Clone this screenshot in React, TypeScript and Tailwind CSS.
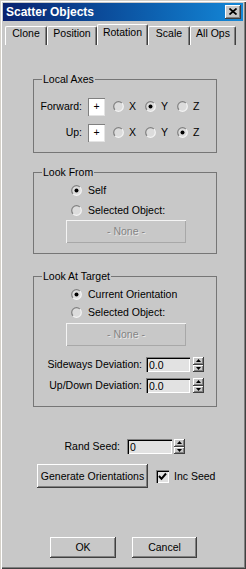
import React from "react";

const RAISED =
  "shadow-[inset_-1px_-1px_#404040,inset_1px_1px_#ffffff,inset_-2px_-2px_#808080]";
const SUNKEN =
  "shadow-[inset_1px_1px_#808080,inset_2px_2px_#000000,inset_-1px_-1px_#ffffff]";

function Radio({ checked }: { checked?: boolean }) {
  return (
    <svg width="11" height="11" viewBox="0 0 11 11" className="shrink-0">
      <circle cx="5.5" cy="5.5" r="4.8" fill="#dcdcdc" />
      <path d="M2.1 8.9 A4.8 4.8 0 0 1 8.9 2.1" fill="none" stroke="#808080" strokeWidth="1.2" />
      <path d="M8.9 2.1 A4.8 4.8 0 0 1 2.1 8.9" fill="none" stroke="#f4f4f4" strokeWidth="1.2" />
      {checked && <circle cx="5.5" cy="5.5" r="2" fill="#000" />}
    </svg>
  );
}

function Spinner({ h = 15 }: { h?: number }) {
  return (
    <div className="flex flex-col w-[11px] h-full shrink-0">
      <div className={`flex-1 bg-[#c8c8c8] flex items-center justify-center ${RAISED}`}>
        <svg width="5" height="3" viewBox="0 0 5 3">
          <path d="M2.5 0 L5 3 L0 3 Z" fill="#000" />
        </svg>
      </div>
      <div className={`flex-1 bg-[#c8c8c8] flex items-center justify-center ${RAISED}`}>
        <svg width="5" height="3" viewBox="0 0 5 3">
          <path d="M0 0 L5 0 L2.5 3 Z" fill="#000" />
        </svg>
      </div>
    </div>
  );
}

function Field({ value, w }: { value: string; w: string }) {
  return (
    <div className={`${w} h-full bg-[#e2e2e2] ${SUNKEN} flex items-center pl-[3px] pt-[1px] shrink-0`}>
      {value}
    </div>
  );
}

function Group({
  label,
  className,
  children,
}: {
  label: string;
  className: string;
  children?: React.ReactNode;
}) {
  return (
    <div className={`relative ml-[30px] w-[184px] border border-[#767676] shrink-0 ${className}`}>
      <span className="absolute -top-[7px] left-[8px] px-[1px] bg-[#c8c8c8] leading-[13px]">
        {label}
      </span>
      {children}
    </div>
  );
}

function Tab({ label, w, selected }: { label: string; w: string; selected?: boolean }) {
  return (
    <div
      className={`${w} ${selected ? "h-[21px] pt-[1px]" : "h-[19px] pt-0"} flex justify-center border-l border-t border-r border-white border-r-[#404040] rounded-t-[2px] shadow-[inset_-1px_0_#808080] shrink-0`}
    >
      <span className="leading-[13px]">{label}</span>
    </div>
  );
}

function NoneButton() {
  return (
    <div className="ml-[32px] w-[120px] h-[23px] flex items-center justify-center text-[#848484] shadow-[inset_1px_1px_#f4f4f4,inset_-1px_-1px_#a8a8a8] [text-shadow:1px_1px_0_#e8e8e8]">
      - None -
    </div>
  );
}

export default function App() {
  return (
    <div className="w-[246px] h-[569px] bg-[#c8c8c8] p-[3px] flex flex-col text-black text-[10.5px] leading-[13px] font-['Liberation_Sans',Arial,sans-serif] shadow-[inset_1px_1px_#d4d0c8,inset_2px_2px_#ffffff,inset_-1px_-1px_#404040,inset_-2px_-2px_#808080] overflow-hidden">
      {/* Title bar */}
      <div className="h-[18px] shrink-0 flex items-center justify-between pl-[3px] pr-[2px] bg-linear-to-r from-[#0a2270] to-[#1488d8]">
        <span className="text-white font-bold text-[12px] leading-[14px]">Scatter Objects</span>
        <div className={`w-[16px] h-[14px] bg-[#c8c8c8] flex items-center justify-center ${RAISED}`}>
          <svg width="8" height="7" viewBox="0 0 8 7" className="-mt-[1px] -ml-[1px]">
            <path d="M0.5 0.5 L7.5 6.5 M7.5 0.5 L0.5 6.5" stroke="#000" strokeWidth="1.7" />
          </svg>
        </div>
      </div>

      {/* Tabs */}
      <div className="mt-[3px] h-[21px] shrink-0 flex items-end pl-[2px]">
        <Tab label="Clone" w="w-[42px]" />
        <Tab label="Position" w="w-[50px]" />
        <Tab label="Rotation" w="w-[51px]" selected />
        <Tab label="Scale" w="w-[42px]" />
        <Tab label="All Ops" w="w-[46px]" />
      </div>

      {/* Local Axes */}
      <Group label="Local Axes" className="mt-[34px] h-[74px]">
        <div className="pt-[17px] flex flex-col">
          {[
            { l: "Forward:", sel: 1 },
            { l: "Up:", sel: 2 },
          ].map((r, i) => (
            <div key={r.l} className={`h-[19px] flex items-center ${i === 1 ? "mt-[7px]" : ""}`}>
              <span className="w-[48px] text-right">{r.l}</span>
              <div className="ml-[6px] w-[17px] h-[18px] bg-white shadow-[inset_1px_1px_#808080,inset_-1px_-1px_#e4e4e4] flex items-center justify-center shrink-0">
                +
              </div>
              <div className="ml-[8px] flex">
                {["X", "Y", "Z"].map((a, j) => (
                  <div key={a} className="w-[32px] flex items-center">
                    <Radio checked={j === r.sel} />
                    <span className="ml-[5px]">{a}</span>
                  </div>
                ))}
              </div>
            </div>
          ))}
        </div>
      </Group>

      {/* Look From */}
      <Group label="Look From" className="mt-[19px] h-[82px]">
        <div className="pt-[7px] flex flex-col">
          <div className="h-[20px] flex items-center pl-[37px]">
            <Radio checked />
            <span className="ml-[6px]">Self</span>
          </div>
          <div className="h-[20px] flex items-center pl-[37px]">
            <Radio />
            <span className="ml-[6px]">Selected Object:</span>
          </div>
          <NoneButton />
        </div>
      </Group>

      {/* Look At Target */}
      <Group label="Look At Target" className="mt-[22px] h-[131px]">
        <div className="pt-[8px] flex flex-col">
          <div className="h-[18px] flex items-center pl-[37px]">
            <Radio checked />
            <span className="ml-[6px]">Current Orientation</span>
          </div>
          <div className="h-[18px] flex items-center pl-[37px]">
            <Radio />
            <span className="ml-[6px]">Selected Object:</span>
          </div>
          <div className="mt-[2px]">
            <NoneButton />
          </div>
          <div className="mt-[11px] h-[15px] flex items-center">
            <span className="w-[108px] text-right">Sideways Deviation:</span>
            <div className="ml-[4px] h-full flex">
              <Field value="0.0" w="w-[44px]" />
            </div>
            <div className="ml-[3px] h-full flex">
              <Spinner />
            </div>
          </div>
          <div className="mt-[6px] h-[15px] flex items-center">
            <span className="w-[108px] text-right">Up/Down Deviation:</span>
            <div className="ml-[4px] h-full flex">
              <Field value="0.0" w="w-[44px]" />
            </div>
            <div className="ml-[3px] h-full flex">
              <Spinner />
            </div>
          </div>
        </div>
      </Group>

      {/* Rand Seed */}
      <div className="mt-[32px] h-[15px] shrink-0 flex items-center">
        <span className="w-[117px] text-right">Rand Seed:</span>
        <div className="ml-[7px] h-full flex">
          <Field value="0" w="w-[45px]" />
        </div>
        <div className="ml-[2px] h-full flex">
          <Spinner />
        </div>
      </div>

      {/* Generate */}
      <div className="mt-[10px] h-[24px] shrink-0 flex items-center">
        <div className={`ml-[34px] w-[111px] h-full flex items-center justify-center bg-[#c8c8c8] ${RAISED}`}>
          Generate Orientations
        </div>
        <div className="ml-[8px] w-[13px] h-[13px] bg-[#e2e2e2] shadow-[inset_1px_1px_#808080,inset_2px_2px_#000000,inset_-1px_-1px_#ffffff] flex items-center justify-center shrink-0">
          <svg width="9" height="9" viewBox="0 0 9 9">
            <path d="M1 4 L3.5 6.8 L8 1.5" fill="none" stroke="#000" strokeWidth="2" />
          </svg>
        </div>
        <span className="ml-[5px]">Inc Seed</span>
      </div>

      {/* OK / Cancel */}
      <div className="mt-[49px] h-[21px] shrink-0 flex">
        <div className={`ml-[47px] w-[66px] h-full flex items-center justify-center ${RAISED}`}>OK</div>
        <div className={`ml-[16px] w-[65px] h-full flex items-center justify-center ${RAISED}`}>Cancel</div>
      </div>
    </div>
  );
}
